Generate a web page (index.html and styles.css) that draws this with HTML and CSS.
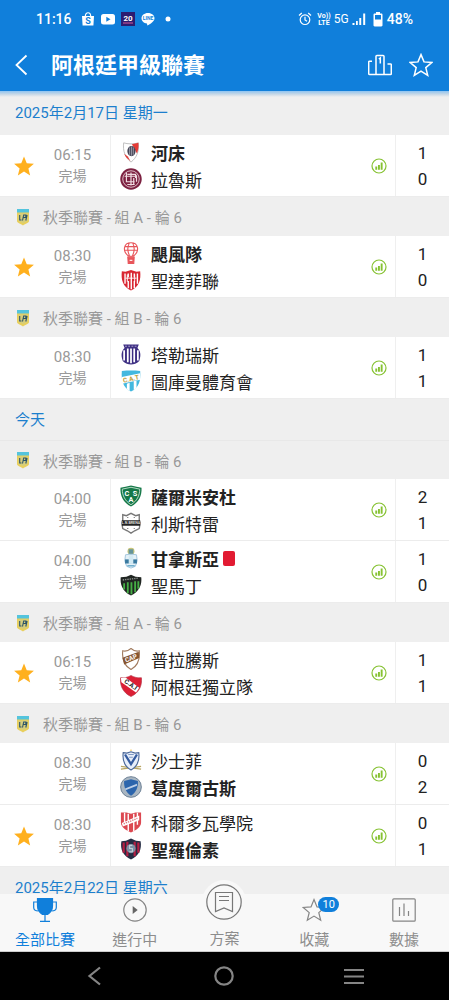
FILE: index.html
```html
<!DOCTYPE html>
<html lang="zh-Hant">
<head>
<meta charset="utf-8">
<meta name="viewport" content="width=device-width, initial-scale=1">
<title>阿根廷甲級聯賽</title>
<link rel="stylesheet" href="styles.css">
</head>
<body>
<svg class="defs" aria-hidden="true">
  <symbol id="star" viewBox="0 0 24 24"><path d="M12 1.6l3 7.3 7.8.6-6 5.1 1.9 7.7L12 18.100l-6.700 4.200 1.900-7.700-6-5.100 7.800-.6z"/></symbol>
  <symbol id="stats" viewBox="0 0 16 16"><circle cx="8" cy="8" r="7" fill="none" stroke="#86c232" stroke-width="1.200"/><path d="M4.300 8.600h1.900v3.200H4.300zM7 7.100h1.900v4.700H7zM9.700 4.400h1.900v7.400H9.700z" fill="#86c232"/></symbol>
  <symbol id="league" viewBox="0 0 14 18"><path d="M1 1h12v12c0 2-3.500 2.500-6 4.500-2.500-2-6-2.500-6-4.500z" fill="#e8cf5c"/><path d="M1 1h12v3.500H1z" fill="#54c4dd"/><path d="M2.500 5.500h9v7.500L7 15l-4.500-2z" fill="#d5cd7c"/><path d="M3.700 7v5h1.800M6.500 12.500l1.200-5.500h2.100v2.500H7.500M9.800 12.500l1.300-5.500" fill="none" stroke="#2d5468" stroke-width="1.100"/></symbol>
</svg>

<header class="header">
  <div class="status">
    <div class="status-side">
      <span>11:16</span>
      <svg class="s-icon" viewBox="0 0 14 14"><path d="M1 4h12l-.6 9.500H1.600z" fill="#fff"/><path d="M4.300 4.500C4.300-.5 9.700-.5 9.700 4.500" fill="none" stroke="#fff" stroke-width="1.200"/><text x="7" y="11.800" class="tiny-blue">S</text></svg>
      <svg class="s-icon" viewBox="0 0 14 14"><rect y="2" width="14" height="10.500" rx="2.500" fill="#fff"/><path d="M5.300 4.700v5l4.200-2.500z" fill="#107fdb"/></svg>
      <svg class="s-icon" viewBox="0 0 14 14"><rect width="14" height="14" fill="#2c1c70"/><text x="7" y="8.500" class="tiny-white">20</text><path d="M2 11h10" stroke="#d65a9a"/></svg>
      <svg class="s-icon" viewBox="0 0 14 14"><path d="M7 1C3.300 1 .5 3.300.5 6.300c0 2.800 2.300 4.900 5.500 5.300l.3 2c3-1.500 7.200-4 7.200-7.300C13.500 3.300 10.700 1 7 1z" fill="#fff"/><text x="7" y="8" class="micro-blue">LINE</text></svg>
      <svg class="s-icon" viewBox="0 0 14 14"><circle cx="7" cy="7" r="2.500" fill="#fff"/></svg>
    </div>
    <div class="status-side status-right">
      <svg class="s-icon alarm" viewBox="0 0 14 14" fill="none" stroke="#fff" stroke-width="1.200"><circle cx="7" cy="7.700" r="4.800"/><path d="M7 4.800v3.200l2 1.200M1 3.500L3.800 1M13 3.500L10.200 1"/></svg>
      <svg class="s-icon" viewBox="0 0 14 14"><text x="7" y="6" class="volte">Vo))</text><text x="7" y="13" class="volte">LTE</text></svg>
      <span class="net">5G</span>
      <svg class="s-icon" viewBox="0 0 14 14" fill="#fff"><path d="M.5 11h2v2h-2zM4 9h1.800v4H4zM7.300 6h1.900v7H7.300zM11.200 1.500h2V13h-2z"/></svg>
      <svg class="battery" viewBox="0 0 10 15"><path d="M3 0h4v1.500h1.300c.7 0 1.200.5 1.200 1.200v10.600c0 .7-.5 1.200-1.200 1.200H1.700c-.7 0-1.200-.5-1.200-1.200V2.700c0-.7.5-1.200 1.200-1.200H3z" fill="#fff"/><path d="M2 3h6v4.500H2z" fill="#107fdb"/></svg>
      <span>48%</span>
    </div>
  </div>
  <div class="toolbar">
    <button class="icon-btn back" aria-label="返回"><svg viewBox="0 0 24 24" fill="none" stroke="#fff" stroke-width="1.800"><path d="M16.500 2.500L6.500 12l10 9.500"/></svg></button>
    <h1>阿根廷甲級聯賽</h1>
    <button class="icon-btn" aria-label="積分榜"><svg viewBox="0 0 24 24" fill="none" stroke="#fff" stroke-width="1.500"><path d="M8 21.500H1.500c-.5 0-.8-.3-.8-.8V9c0-.5.300-.8.800-.8H4M8 21.500V3.300c0-.6.300-.9.900-.9h6.200c.6 0 .9.300.9.900v18.200zM19.500 11h3c.5 0 .8.300.8.800v8.900c0 .5-.3.800-.8.800H16M10.800 6l1.500-1v5.500"/></svg></button>
    <button class="icon-btn" aria-label="收藏聯賽"><svg viewBox="0 0 24 24" class="outline"><use href="#star"/></svg></button>
  </div>
</header>

<main class="feed">
  <h2 class="date first">2025年2月17日 星期一</h2>

  <article class="match">
    <button class="fav" aria-label="取消收藏"><svg><use href="#star"/></svg></button>
    <div class="time"><span>06:15</span><span class="state">完場</span></div>
    <div class="teams">
      <div class="team win"><svg viewBox="0 0 24 24"><path d="M4 2c4 1.500 12 1.500 16 0 1 9-1.500 16-8 21C5.500 18 3 11 4 2z" fill="#fff" stroke="#aaa" stroke-width=".8"/><path d="M20 2c.7 4-.1 8-1.500 11.500L16 9l-3-5.500z" fill="#e33a35"/><path d="M4.500 14l4 3 3 5c-3-2-5.500-4.500-7-8z" fill="#e33a35"/><ellipse cx="12.500" cy="11" rx="4.500" ry="5.500" fill="#445"/><path d="M10.500 7v8M12.500 6v10M14.500 7v8" stroke="#a9aab5" stroke-width=".9"/></svg><span>河床</span></div>
      <div class="team"><svg viewBox="0 0 24 24"><circle cx="12" cy="12" r="11.700" fill="#7c2141"/><circle cx="12" cy="12" r="9" fill="none" stroke="#e5c9d2"/><path d="M7 5v10h9M5 9h13M8 7h9v4M12 5v14M15 11v7M8 18h8M18 8v7" fill="none" stroke="#f1dde3" stroke-width="1.300"/></svg><span>拉魯斯</span></div>
    </div>
    <svg class="stats" role="img" aria-label="統計"><use href="#stats"/></svg>
    <div class="score"><span>1</span><span>0</span></div>
  </article>

  <h3 class="league"><svg><use href="#league"/></svg>秋季聯賽 - 組 A - 輪 6</h3>
  <article class="match">
    <button class="fav" aria-label="取消收藏"><svg><use href="#star"/></svg></button>
    <div class="time"><span>08:30</span><span class="state">完場</span></div>
    <div class="teams">
      <div class="team win"><svg viewBox="0 0 24 24" fill="none" stroke="#e8555a" stroke-width="1.200"><path d="M9.500 15.500C2 10 4 .8 12 .8s10 9.200 2.500 14.700zM5.500 5h13M5.500 9h13M10 1.500c-2 4-1.500 10 .5 14M14 1.500c2 4 1.500 10-.5 14"/><path d="M8.500 16.500h7l-.5 7H9z" fill="#e8555a"/><path d="M10.500 20h3" stroke="#fff"/></svg><span>颶風隊</span></div>
      <div class="team"><svg viewBox="0 0 24 24"><path d="M2 2.500l4 .5 6-2 6 2 4-.5c1 9-1 17-10 21C3 19.500 1 11.500 2 2.500z" fill="#d92732"/><path d="M5.500 5v11M9 5v4M9 13v8M12.300 4v18M15.600 5v4M15.600 13v8M19 5v11" stroke="#fff" stroke-width="1.500"/><path d="M6 10h12M8 6v8M16 6v8" stroke="#fff"/></svg><span>聖達菲聯</span></div>
    </div>
    <svg class="stats" role="img" aria-label="統計"><use href="#stats"/></svg>
    <div class="score"><span>1</span><span>0</span></div>
  </article>

  <h3 class="league"><svg><use href="#league"/></svg>秋季聯賽 - 組 B - 輪 6</h3>
  <article class="match">
    <span></span>
    <div class="time"><span>08:30</span><span class="state">完場</span></div>
    <div class="teams">
      <div class="team"><svg viewBox="0 0 24 24"><path d="M3.500 1.500h17l-1.500 4c3 3 4.500 7 2 14-3 3-6 3.500-9 4-3-.5-6-1-9-4-2.500-7-1-11 2-14z" fill="#3e2f83"/><path d="M4.500 8v11M8.500 6v15M12 6v16M15.500 6v15M19.500 8v11" stroke="#fff" stroke-width="1.900"/><path d="M5.500 3.500h13" stroke="#b5add5" stroke-dasharray="2 1.500"/></svg><span>塔勒瑞斯</span></div>
      <div class="team"><svg viewBox="0 0 24 24"><path d="M2 1c7-.6 13-.6 20 0 .8 10-1 18-10 22.500C3 19 1.200 11 2 1z" fill="#43b8df"/><path d="M2 7.500l20-4v7L2.300 15zM7.500 15v6l3 1.800V14zM15 12v10l3-2.500V11z" fill="#fff"/><text x="12" y="12" class="crest-text gold" transform="rotate(-12 12 10)">C.A.T</text></svg><span>圖庫曼體育會</span></div>
    </div>
    <svg class="stats" role="img" aria-label="統計"><use href="#stats"/></svg>
    <div class="score"><span>1</span><span>1</span></div>
  </article>

  <h2 class="date">今天</h2>
  <h3 class="league ruled"><svg><use href="#league"/></svg>秋季聯賽 - 組 B - 輪 6</h3>
  <article class="match">
    <span></span>
    <div class="time"><span>04:00</span><span class="state">完場</span></div>
    <div class="teams">
      <div class="team win"><svg viewBox="0 0 24 24"><path d="M.5 3L6 2l6-1.500L18 2l5.500 1c.5 9-3 16-11.500 20.500C3.500 19 0 12 .5 3z" fill="#157848"/><path d="M2.500 4.500l9.500-2 9.500 2c0 7-3 13-9.500 17C5.500 17.500 2.500 11.500 2.500 4.500z" fill="none" stroke="#d4eadc" stroke-width=".9"/><text x="7.500" y="11.500" class="crest-text big light">C</text><text x="16.500" y="11.500" class="crest-text big light">S</text><text x="12" y="19" class="crest-text big light">A</text></svg><span>薩爾米安杜</span></div>
      <div class="team"><svg viewBox="0 0 24 24"><path d="M3 3l4 1 5-2.500L17 4l4-1v6l1 3-1 6-5 2.500-4 2.500-4-2.500L3 18l-1-6 1-3z" fill="#fff" stroke="#777" stroke-width="1.500"/><path d="M2 9h20v6H2z" fill="#222"/><text x="12" y="13.500" class="crest-small">L.N.BRENA</text><path d="M8 6h1m6 0h1M8 18h1m6 0h1" stroke="#555" stroke-width="1.300"/></svg><span>利斯特雷</span></div>
    </div>
    <svg class="stats" role="img" aria-label="統計"><use href="#stats"/></svg>
    <div class="score"><span>2</span><span>1</span></div>
  </article>
  <article class="match">
    <span></span>
    <div class="time"><span>04:00</span><span class="state">完場</span></div>
    <div class="teams">
      <div class="team win"><svg viewBox="0 0 24 24"><circle cx="12" cy="4.500" r="3.800" fill="#c9c579"/><path d="M9.500 2.500h5v5h-5z" fill="#64949b"/><path d="M6 8.500l4-.5h4l4 .5.800 6.500-2 6-4.800 2-4.800-2-2-6z" fill="#e5f1f8" stroke="#9ec3dc"/><path d="M5.500 13.500h13V18h-13z" fill="#39799f"/><path d="M9.500 9h5v9.500h-5z" fill="#d3eaf3"/><path d="M8 20.500h8" stroke="#63a7c8" stroke-width="1.500"/></svg><span>甘拿斯亞</span><i class="red-card" role="img" aria-label="紅牌"></i></div>
      <div class="team"><svg viewBox="0 0 24 24"><path d="M.8 3.500L7 3l5-2.200L17 3l6.200.5c1 9-3 16-11.200 20C3.800 19.500-.2 12.500.8 3.500z" fill="#202522"/><path d="M4.500 10v7M8.500 9v12M12.500 9v13M16.500 8v12M20 8v8" stroke="#45ae45" stroke-width="2"/><path d="M3 6.500L20 4.500" stroke="#8b908d" stroke-width="1.500" stroke-dasharray="1.500 1"/></svg><span>聖馬丁</span></div>
    </div>
    <svg class="stats" role="img" aria-label="統計"><use href="#stats"/></svg>
    <div class="score"><span>1</span><span>0</span></div>
  </article>

  <h3 class="league"><svg><use href="#league"/></svg>秋季聯賽 - 組 A - 輪 6</h3>
  <article class="match">
    <button class="fav" aria-label="取消收藏"><svg><use href="#star"/></svg></button>
    <div class="time"><span>06:15</span><span class="state">完場</span></div>
    <div class="teams">
      <div class="team"><svg viewBox="0 0 24 24"><path d="M3 3c3 1 6 0 9-2.500 3 2.500 6 3.500 9 2.500 1 9-1 16-9 20.500C4 19 2 12 3 3z" fill="#fff" stroke="#a17a5d" stroke-width="1.200"/><path d="M2.800 10.500L20.500 4l.5 7L4.500 18z" fill="#87552f"/><text x="12" y="13.500" class="crest-text light" transform="rotate(-21 12 11)">CAP</text></svg><span>普拉騰斯</span></div>
      <div class="team"><svg viewBox="0 0 24 24"><path d="M.6 3c4 .5 8-.5 11.400-2.500C15.400 2.500 19.400 3.500 23.400 3c1 9-3 16.500-11.400 20.500C3.600 19.500-.4 12 .6 3z" fill="#dc1f35" stroke="#b3364a" stroke-width=".7"/><path d="M1 3.200l5-.4L21 14l-3.500 5L1.500 8z" fill="#fff"/><text x="11.500" y="13" class="crest-text dark" transform="rotate(36 12 11)">C.A.I</text></svg><span>阿根廷獨立隊</span></div>
    </div>
    <svg class="stats" role="img" aria-label="統計"><use href="#stats"/></svg>
    <div class="score"><span>1</span><span>1</span></div>
  </article>

  <h3 class="league"><svg><use href="#league"/></svg>秋季聯賽 - 組 B - 輪 6</h3>
  <article class="match">
    <span></span>
    <div class="time"><span>08:30</span><span class="state">完場</span></div>
    <div class="teams">
      <div class="team"><svg viewBox="0 0 24 24"><path d="M1 19l22 3M23 19L1 22" stroke="#b9a563" stroke-width="1.500"/><path d="M3.500 4l4 .5L12 3l4.500 1.500 4-.5c1 8-1.500 15-8.500 19C5 19 2.500 12 3.500 4z" fill="#e7eefa" stroke="#4a6798" stroke-width="1.200"/><path d="M5.500 6L12 16.500 18.500 6" fill="none" stroke="#345ba0" stroke-width="2.500"/><path d="M9 6h6M10 9h4" stroke="#7790bc"/><path d="M12 0l1 2h-2z" fill="#f2bb3b"/></svg><span>沙士菲</span></div>
      <div class="team win"><svg viewBox="0 0 24 24"><circle cx="12" cy="12" r="11.300" fill="#a9b6c2" stroke="#65798f"/><path d="M4.500 5.500L12 3.500l7.500 2c.5 7-2 12.500-7.500 16-5.500-3.500-8-9-7.500-16z" fill="#2c65ac"/><path d="M5.500 13.500l13-5v2l-12.500 5z" fill="#bed0e7"/></svg><span>葛度爾古斯</span></div>
    </div>
    <svg class="stats" role="img" aria-label="統計"><use href="#stats"/></svg>
    <div class="score"><span>0</span><span>2</span></div>
  </article>
  <article class="match">
    <button class="fav" aria-label="取消收藏"><svg><use href="#star"/></svg></button>
    <div class="time"><span>08:30</span><span class="state">完場</span></div>
    <div class="teams">
      <div class="team"><svg viewBox="0 0 24 24"><path d="M1 1.500h6L12 3l5-1.500h6v11c0 5-5 8-11 11-6-3-11-6-11-11z" fill="#dc4851"/><path d="M5 2v13M9 3v19M15 3v19M19 2v13" stroke="#fff" stroke-width="1.500"/><path d="M2 13L21 5v5L3 17z" fill="#fff"/><path d="M4 14l15-6" stroke="#dc7b82" stroke-width="1.500" stroke-dasharray="1.500 1"/></svg><span>科爾多瓦學院</span></div>
      <div class="team win"><svg viewBox="0 0 24 24"><path d="M1.500 3.500l5-.5L12 .5 17.500 3l5 .5c1.500 9-2 16-10.500 20C3.500 19.500 0 12.500 1.500 3.500z" fill="#242c43"/><path d="M4 5v11M8 4v16M16 4v16M20 5v11" stroke="#b51f43" stroke-width="2.400"/><circle cx="12" cy="11.500" r="5" fill="#7c90a4"/><path d="M13.500 8h-3v3.500h3V15H10" fill="none" stroke="#c5d0da" stroke-width="1.200"/></svg><span>聖羅倫素</span></div>
    </div>
    <svg class="stats" role="img" aria-label="統計"><use href="#stats"/></svg>
    <div class="score"><span>0</span><span>1</span></div>
  </article>

  <h2 class="date">2025年2月22日 星期六</h2>
</main>

<nav class="tabs" aria-label="主選單">
  <a href="#all" class="tab active" aria-current="page"><svg viewBox="0 0 24 24" fill="none" stroke="#107fdb" stroke-width="1.200"><path d="M4.500.7h15V8c0 5-3.500 7.500-5 8.500h-5C8 15.500 4.500 13 4.500 8z" fill="#107fdb"/><path d="M4.500 4H.7v5.500c0 2.500 1.500 3.500 4.800 3.500M19.500 4h3.800v5.500c0 2.500-1.500 3.500-4.800 3.500M12 16v7.300M7 23.400h10"/></svg><span>全部比賽</span></a>
  <a href="#live" class="tab"><svg viewBox="0 0 24 24"><circle cx="12" cy="12" r="11.200" fill="none" stroke="#858585" stroke-width="1.200"/><path d="M9.700 8v8l5-4z" fill="#666"/></svg><span>進行中</span></a>
  <a href="#coupon" class="tab raised"><span class="bubble"><svg viewBox="0 0 36 36" fill="none" stroke="#777" stroke-width="1.200"><circle cx="18" cy="18" r="17.200"/><path d="M9.500 8.500h17v19L18 24l-8.500 3.500zM13 12.500h10M13 16.500h10"/></svg></span><span>方案</span></a>
  <a href="#favorites" class="tab"><svg viewBox="0 0 24 24" class="outline grey"><use href="#star"/></svg><b class="badge">10</b><span>收藏</span></a>
  <a href="#data" class="tab"><svg viewBox="0 0 24 24" fill="none" stroke="#858585" stroke-width="1.200"><rect x=".8" y=".8" width="22.400" height="22.400" rx="1"/><path d="M7.500 9v9M12 5.500V18M16.500 13v5"/></svg><span>數據</span></a>
</nav>

<div class="system">
  <button aria-label="系統返回"><svg viewBox="0 0 24 24"><path d="M17 3.500L6.500 12 17 20.500"/></svg></button>
  <button aria-label="主畫面"><svg viewBox="0 0 24 24"><circle cx="12" cy="12" r="8.700"/></svg></button>
  <button aria-label="最近使用"><svg viewBox="0 0 24 24"><path d="M2 6h20M2 12.500h20M2 19h20"/></svg></button>
</div>
</body>
</html>
```

FILE: styles.css
```css
* { box-sizing: border-box; }

body {
  margin: 0;
  height: 100vh;
  display: flex;
  flex-direction: column;
  overflow: hidden;
  background: #efefef;
  color: #222;
  font-family: Roboto, "Noto Sans CJK TC", sans-serif;
}

button { border: 0; padding: 0; background: none; font: inherit; color: inherit; display: grid; place-items: center; }
h1, h2, h3 { margin: 0; font-weight: 400; }
svg { display: block; flex: none; }
.defs { position: absolute; width: 0; height: 0; }

/* Header */
.header { position: relative; z-index: 1; flex: none; background: #107fdb; color: #fff; }
.header::after {
  content: "";
  position: absolute;
  top: 100%;
  left: 0;
  right: 0;
  height: 6px;
  background: linear-gradient(#8fc4f1, #c3d6e6 50%, #efefef);
}
.status { display: flex; justify-content: space-between; height: 38px; padding: 0 36px; font-size: 14px; font-weight: 500; }
.status-side { display: flex; align-items: center; gap: 6px; }
.status-side:first-child > span { margin-right: 3px; }
.status-right { gap: 3px; }
.s-icon { width: 14px; height: 14px; }
.alarm { margin-right: 2px; }
.battery { width: 10px; height: 15px; margin: 0 1px 0 4px; }
.net { font-size: 12px; font-weight: 400; }
.toolbar { display: flex; align-items: center; height: 53px; padding: 1px 16px 0 10px; gap: 17px; }
.toolbar h1 { flex: 1; padding-top: 2px; font-size: 22px; font-weight: 700; line-height: 32px; }
.icon-btn, .icon-btn svg { width: 24px; height: 24px; }
.outline { fill: none; stroke: #fff; stroke-width: 1.5; overflow: visible; }
.outline.grey { stroke: #858585; stroke-width: 1.2; }

/* Text inside small marks */
text { font-family: Roboto, sans-serif; font-weight: 700; text-anchor: middle; }
.tiny-blue { font-size: 9px; fill: #107fdb; }
.tiny-white { font-size: 8px; fill: #fff; }
.micro-blue { font-size: 5px; fill: #107fdb; }
.volte { font-size: 7px; fill: #fff; }
.crest-text { font-size: 7px; }
.crest-text.big { font-size: 8px; }
.crest-small { font-size: 4px; fill: #ddd; }
.light { fill: #fff; }
.gold { fill: #b99a35; }
.dark { fill: #222; }

/* Match list */
.feed { flex: 1; min-height: 0; overflow-y: auto; scrollbar-width: none; }
.date { height: 41px; padding: 3px 15px 0; font-size: 15px; line-height: 36px; color: #1c7fcd; }
.date.first { height: 44px; padding-top: 4px; }
.league { display: flex; align-items: center; gap: 13px; height: 39px; padding: 0 16px; font-size: 15px; color: #999; }
.league svg { width: 14px; height: 18px; }
.league.ruled { border-top: 1px solid #e8e8e8; }

.match {
  display: grid;
  grid-template-columns: 22px 75px 1fr 32px 54px;
  align-items: center;
  height: 62px;
  padding-left: 13px;
  background: #fff;
  border-bottom: 1px solid #ececec;
}
.fav svg { width: 22px; height: 22px; fill: #ffb01e; }
.time { display: grid; justify-items: center; font-size: 15px; line-height: 21px; color: #999; }
.state { font-size: 14px; }
.teams, .score { display: grid; align-content: center; height: 100%; border-left: 1px solid #efefef; font-size: 17px; }
.teams { padding-left: 9px; grid-auto-rows: 27px; }
.team { display: flex; align-items: center; white-space: nowrap; }
.team svg { width: 22px; height: 22px; margin-right: 9px; }
.win { font-weight: 700; }
.red-card { width: 12px; height: 15px; margin-left: 4px; border-radius: 2px; background: #e21b32; }
.stats { width: 16px; height: 16px; justify-self: center; }
.score { justify-items: center; line-height: 26px; }

/* Bottom tabs */
.tabs { position: relative; z-index: 1; flex: none; display: grid; grid-template-columns: repeat(5, 1fr); height: 58px; background: #f8f8f8; border-bottom: 1px solid #ccc; }
.tab { position: relative; display: flex; flex-direction: column; align-items: center; gap: 7px; padding-top: 4px; font-size: 15px; line-height: 22px; color: #8d8d8d; text-decoration: none; }
.tab svg { width: 24px; height: 24px; }
.tab.active { color: #107fdb; }
.raised { padding-top: 34px; }
.bubble { position: absolute; top: -14px; padding: 4px; border-radius: 50%; background: #f8f8f8; }
.raised svg { width: 36px; height: 36px; }
.badge { position: absolute; top: 3px; left: 50%; margin-left: 4px; width: 21px; border-radius: 8px; background: #107fdb; color: #fff; font-size: 11px; font-weight: 400; line-height: 15px; text-align: center; }

/* System navigation */
.system { flex: none; display: grid; grid-template-columns: repeat(3, 1fr); height: 48px; padding: 0 30px; background: #000; }
.system svg { width: 24px; height: 24px; fill: none; stroke: #858585; stroke-width: 2.2; }
```
